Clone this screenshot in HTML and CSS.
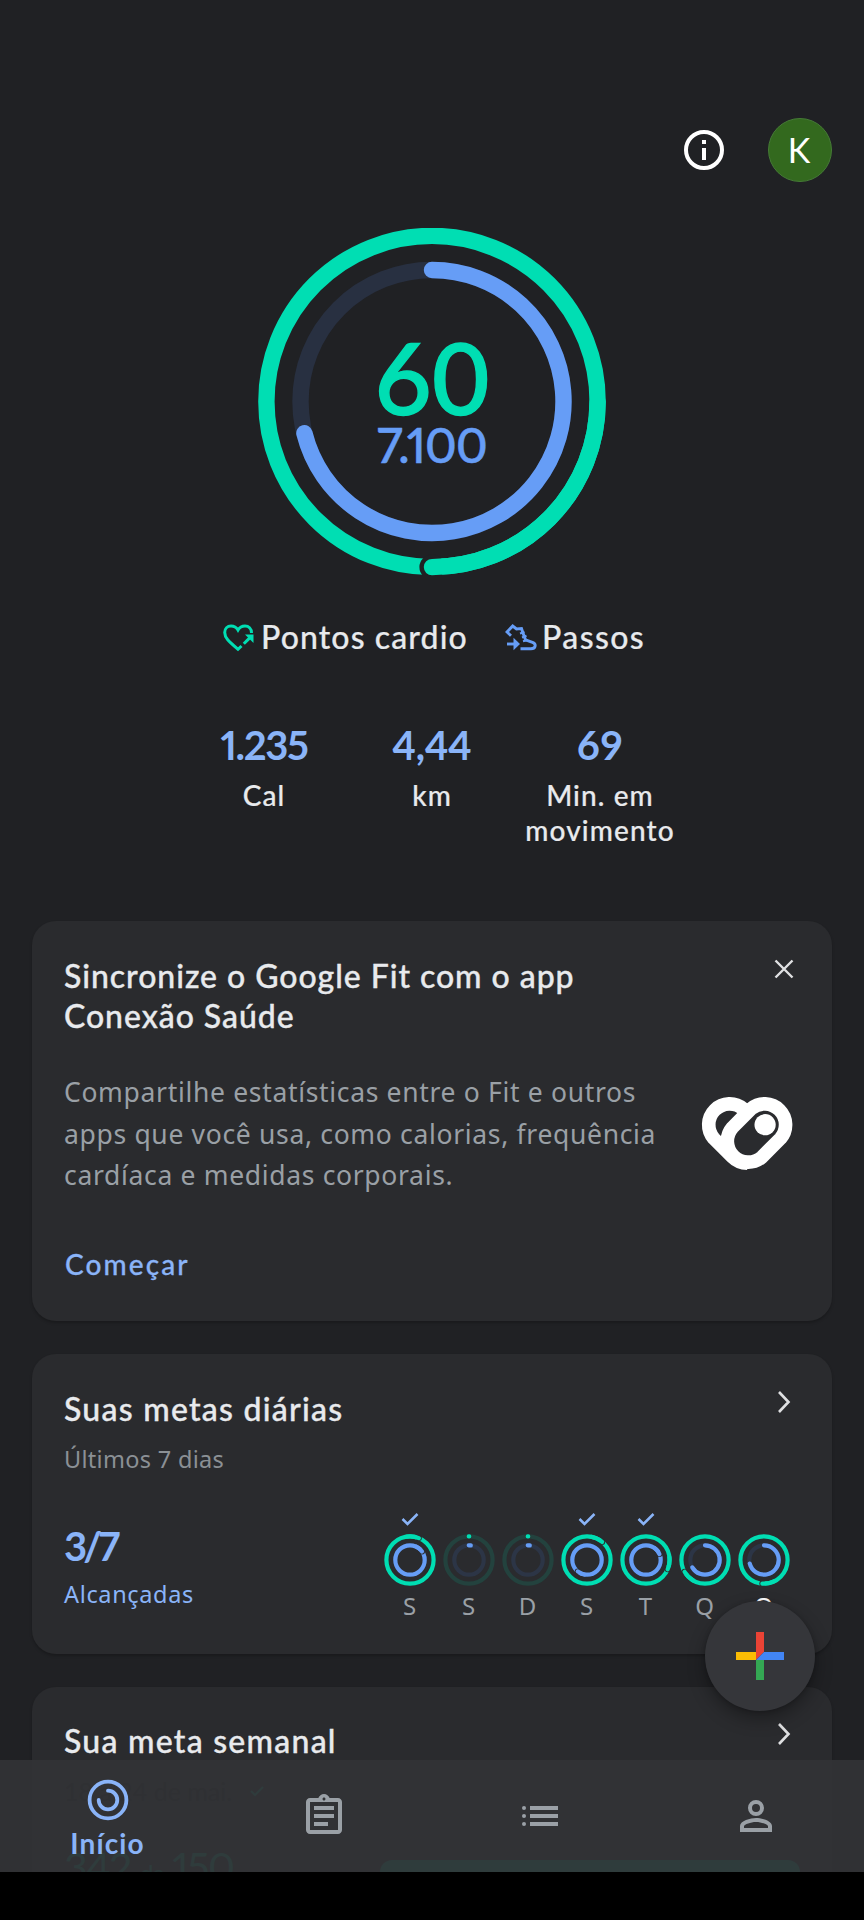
FILE: index.html
```
<!DOCTYPE html>
<html lang="pt-BR">
<head>
<meta charset="utf-8">
<title>Fit</title>
<link rel="stylesheet" href="styles.css">
</head>
<body>
<div class="screen">
  <header class="topbar">
    <svg class="info" width="40" height="40" viewBox="0 0 40 40"><circle cx="20" cy="20" r="18" fill="none" stroke="#fff" stroke-width="4"/><path d="M18 10h4v4h-4zM18 18h4v12h-4z" fill="#fff"/></svg>
    <div class="avatar">K</div>
  </header>

  <section class="summary">
    <svg class="rings" width="348" height="348" viewBox="-174 -173.5 348 348" fill="none" stroke-width="16.4">
      <circle r="165.6" stroke="#00deb3"/>
      <circle cy="165.6" r="12.6" fill="#202124"/>
      <path d="M0 165.6A165.6 165.6 0 0 0 165.6 0" stroke="#00deb3" stroke-linecap="round"/>
      <circle r="131.5" stroke="#283041"/>
      <path d="M0 -131.5A131.5 131.5 0 1 1 -127.6 31.8" stroke="#669df6" stroke-linecap="round"/>
    </svg>
    <div class="totals">
      <div class="points">60</div>
      <div class="steps">7.100</div>
    </div>
  </section>

  <div class="legend">
    <svg width="32" height="28" viewBox="0 0 32 28" fill="none" stroke="#00deb3" stroke-width="3"><path d="M28.500 9C28.500 4.500 25.500 2 22 2C19 2 16.500 3.500 15 6C13.500 3.500 11 2 8 2C4.500 2 1.700 4.700 1.700 8.500C1.700 14 6 17.500 15 25.300L18.500 22"/><path d="M20.800 19.800L27 13.600"/><path d="M22 10.500H30.500v8.500z" fill="#00deb3" stroke="none"/></svg>
    <span class="legend-cardio">Pontos cardio</span>
    <svg width="32" height="28" viewBox="0 0 32 28" fill="none" stroke="#669df6" stroke-width="2.900"><path d="M6 11.800L2 8L7.700 2L11.500 5L16.500 4.500L18 9L20.500 15.800L27.500 18.300C30 19.300 30.500 20.800 30 22.500C29.500 24.300 28.200 24.700 26 24.700H15.500"/><path d="M15 9.500L19.500 8M17 13.500L21.500 11.800M18 17.300L23 16" stroke-width="2.200"/><path d="M2 20H10"/><path d="M8.500 13.800L15 20L8.500 26.200z" fill="#669df6" stroke="none"/></svg>
    <span class="legend-steps">Passos</span>
  </div>

  <section class="stats">
    <div><div class="stat-value calories">1.235</div><div class="stat-label">Cal</div></div>
    <div><div class="stat-value">4,44</div><div class="stat-label">km</div></div>
    <div><div class="stat-value">69</div><div class="stat-label">Min. em<br>movimento</div></div>
  </section>

  <main class="cards">
    <article class="card sync">
      <div class="sync-text">
        <h2>Sincronize o Google Fit com o app<br>Conexão Saúde</h2>
        <p class="body">Compartilhe estatísticas entre o Fit e outros<br>apps que você usa, como calorias, frequência<br>cardíaca e medidas corporais.</p>
        <a class="start">Começar</a>
      </div>
      <div class="sync-side">
        <svg class="close" width="20" height="20" viewBox="0 0 20 20"><path d="M1.500 1.500L18.500 18.500M18.500 1.500L1.500 18.500" stroke="#e0e1e3" stroke-width="2.400"/></svg>
        <svg width="93" height="75" viewBox="0 0 92 74" fill="none" stroke="#fff" stroke-width="13.500"><path d="M45.700 45.700m0 20.700A20.700 20.700 0 0 1 31.100 60.300L12.700 41.900A20.700 20.700 0 0 1 41.900 12.700L45 16"/><path d="M49.400 12.700L31.100 31.100A20.700 20.700 0 0 0 60.300 60.300L78.600 41.900A20.700 20.700 0 0 0 49.400 12.700z"/><circle cx="63.400" cy="28.300" r="10.500" fill="#fff" stroke="none"/></svg>
      </div>
    </article>

    <article class="card goals">
      <div class="card-head"><h2 class="wide">Suas metas diárias</h2>
        <svg class="chevron" width="14" height="24" viewBox="0 0 14 24"><path d="M2 2L11.500 12L2 22" fill="none" stroke="#dfe0e2" stroke-width="2.600"/></svg></div>
      <div class="sub">Últimos 7 dias</div>
      <div class="goals-row">
        <div class="reached"><div class="ratio">3/7</div><div class="reached-label">Alcançadas</div></div>
        <div class="week" id="week"></div>
      </div>
    </article>

    <article class="card weekly">
      <div class="card-head"><h2 class="wide">Sua meta semanal</h2>
        <svg class="chevron" width="14" height="24" viewBox="0 0 14 24"><path d="M2 2L11.500 12L2 22" fill="none" stroke="#dfe0e2" stroke-width="2.600"/></svg></div>
      <div class="range">18 a 24 de mai. <svg width="14" height="11" viewBox="0 0 14 11"><path d="M1 5L5 9L13 1" fill="none" stroke="#00deb3" stroke-width="2"/></svg></div>
      <div class="weekly-row"><div class="weekly-points">342 <small>de</small> 150</div><div class="bar"></div></div>
    </article>
  </main>

  <button class="fab" aria-label="Adicionar"><svg width="48" height="48" viewBox="0 0 48 48"><path d="M0 20h20v8H0z" fill="#fbbc04"/><path d="M20 0h8v20l-8 8z" fill="#ea4335"/><path d="M20 28h8v20h-8z" fill="#34a853"/><path d="M28 20h20v8H20z" fill="#4285f4"/></svg></button>

  <nav class="nav">
    <a class="tab active"><svg width="42" height="42" viewBox="-21 -21 42 42" fill="none" stroke="#8ab4f8" stroke-width="3.800"><circle r="18.400"/><path d="M0 -9.300A9.300 9.300 0 1 1 -9.300 0" stroke-linecap="round"/></svg><span>Início</span></a>
    <a class="tab"><svg width="48" height="48" viewBox="0 0 24 24" fill="#9aa0a6"><path d="M7 15h7v2H7zm0-4h10v2H7zm0-4h10v2H7zm12-4h-4.180C14.400 1.840 13.300 1 12 1s-2.400.84-2.820 2H5c-1.100 0-2 .9-2 2v14c0 1.100.9 2 2 2h14c1.100 0 2-.9 2-2V5c0-1.100-.9-2-2-2zm-7-.250c.41 0 .75.340.75.750s-.340.750-.75.750-.75-.340-.75-.750.340-.750.750-.750zM19 19H5V5h14v14z"/></svg></a>
    <a class="tab"><svg width="36" height="20" viewBox="0 0 36 20" fill="#9aa0a6"><circle cx="2" cy="2" r="2"/><circle cx="2" cy="10" r="2"/><circle cx="2" cy="18" r="2"/><path d="M8 0h28v4H8zM8 8h28v4H8zM8 16h28v4H8z"/></svg></a>
    <a class="tab"><svg width="48" height="48" viewBox="0 0 24 24" fill="#9aa0a6"><path fill-rule="evenodd" d="M12 4a4 4 0 1 0 0 8a4 4 0 1 0 0-8zM12 6a2 2 0 1 1 0 4a2 2 0 1 1 0-4zM12 13c-2.670 0-8 1.340-8 4v3h16v-3c0-2.660-5.330-4-8-4zm6 5H6v-.99c.2-.720 3.300-2.010 6-2.010s5.800 1.290 6 2v1z"/></svg></a>
  </nav>
  <div class="system-bar"></div>
</div>
<script src="week.js"></script>
</body>
</html>
```
FILE: styles.css
```
* { box-sizing: border-box; }
body { margin: 0; background: #202124; font-family: Lato, "Liberation Sans", sans-serif; color: #e8eaed; }
h2, p { margin: 0; }
svg { display: block; flex: none; }
.screen { position: relative; width: 864px; height: 1920px; overflow: hidden; display: flex; flex-direction: column; }

.topbar { height: 228px; padding: 118px 32px 0 0; display: flex; justify-content: flex-end; gap: 44px; flex: none; }
.info { margin-top: 12px; }
.avatar { width: 64px; height: 64px; padding-right: 2px; border-radius: 50%; background: #33691e; border: 1.5px solid #457a36; display: flex; align-items: center; justify-content: center; font: 400 34px/64px Lato, sans-serif; color: #fff; }

.summary { display: grid; justify-items: center; height: 348px; flex: none; }
.rings, .totals { grid-area: 1 / 1; }
.totals { padding-top: 109px; text-align: center; font-weight: 500; }
.points { font-size: 99px; line-height: 80px; color: #00deb3; -webkit-text-stroke: 1.4px; }
.steps { margin-top: 4px; font-size: 48px; line-height: 48px; font-variant-numeric: proportional-nums; letter-spacing: -.8px; color: #669df6; -webkit-text-stroke: .6px; }

.legend { display: flex; height: 40px; margin: 40px 0 64px; padding-left: 223px; font-size: 32px; line-height: 41px; font-weight: 500; letter-spacing: 1.1px; -webkit-text-stroke: .2px; flex: none; }
.legend svg { margin-top: 8px; }
.legend-cardio { width: 244px; margin-left: 6px; }
.legend-steps { margin-left: 5px; letter-spacing: 1.4px; }

.stats { display: grid; grid-template-columns: repeat(3, 168px); justify-content: center; height: 201px; padding-top: 1px; text-align: center; font-weight: 500; flex: none; }
.stat-value { font-size: 40px; line-height: 48px; font-weight: 700; color: #8ab4f8; }
.calories { font-variant-numeric: proportional-nums; letter-spacing: -1.4px; }
.stat-label { margin-top: 9px; font-size: 28px; line-height: 35px; letter-spacing: 1.1px; -webkit-text-stroke: .2px; }

.cards { display: flex; flex-direction: column; gap: 33px; padding: 0 32px; }
.card { background: #2a2b2e; border-radius: 24px; padding: 35px 32px 0; box-shadow: 0 2px 3px rgba(0, 0, 0, .22); flex: none; }
.card h2 { font-size: 32px; line-height: 40px; font-weight: 500; letter-spacing: .95px; -webkit-text-stroke: .35px; white-space: nowrap; }
.card h2.wide { letter-spacing: 1.25px; }
.sync { height: 400px; display: flex; justify-content: space-between; }
.sync-text { width: 600px; }
.body { margin-top: 36px; font: 400 26.5px/41.6px "Noto Sans", sans-serif; letter-spacing: .67px; color: #9aa0a6; white-space: nowrap; }
.start { display: block; margin: 49px 0 0 1px; font-size: 28px; line-height: 36px; font-weight: 500; letter-spacing: 2.1px; -webkit-text-stroke: .3px; color: #8ab4f8; }
.sync-side { display: flex; flex-direction: column; align-items: flex-end; gap: 117px; padding: 3px 6px 0 0; }

.card-head { display: flex; justify-content: space-between; }
.chevron { margin: 1px 9px 0 0; }
.goals { height: 300px; }
.sub { margin-top: 14px; font: 400 23.5px/32px "Noto Sans", sans-serif; letter-spacing: .3px; color: #8b9095; }
.goals-row { display: flex; justify-content: space-between; margin-top: 38px; }
.reached { padding-top: 9px; color: #8ab4f8; }
.ratio { font-size: 40px; line-height: 48px; font-weight: 700; letter-spacing: -4px; }
.reached-label { margin-top: 8px; font: 400 23.5px/32px "Noto Sans", sans-serif; letter-spacing: .65px; }
.week { display: grid; grid-template-columns: repeat(7, 59px); margin-right: 7px; }
.day { display: flex; flex-direction: column; align-items: center; }
.tick { height: 21px; }
.day-label { margin-top: 4px; font: 400 24px/32px "Noto Sans", sans-serif; color: #9aa0a6; }
.day-label.today { color: #fff; }

.weekly { height: 300px; }
.weekly .card-head { margin-top: -1px; }
.range { display: flex; gap: 18px; align-items: center; margin-top: 14px; font-size: 25px; line-height: 32px; color: #000; }
.weekly-row { display: flex; justify-content: space-between; margin-top: 36px; }
.weekly-points { font-size: 41px; line-height: 48px; font-variant-numeric: proportional-nums; letter-spacing: -1.4px; color: #00deb3; }
.weekly-points small { font-size: 24px; }
.bar { width: 420px; height: 24px; margin: 17px 0 0 0; border-radius: 12px; background: #00deb3; }

.fab { position: absolute; left: 705px; top: 1601px; width: 110px; height: 110px; border: 0; padding: 0; border-radius: 50%; background: #35363a; display: flex; align-items: center; justify-content: center; box-shadow: 0 8px 18px rgba(0, 0, 0, .32), 0 1px 4px rgba(0, 0, 0, .2); }
.nav { position: absolute; left: 0; top: 1760px; width: 864px; height: 112px; background: rgba(50, 51, 54, .95); display: grid; grid-template-columns: repeat(4, 216px); }
.tab { display: flex; flex-direction: column; align-items: center; justify-content: center; }
.tab.active { justify-content: flex-start; padding: 19px 1px 0 0; font-size: 28px; line-height: 36px; font-weight: 700; letter-spacing: 1.1px; color: #8ab4f8; }
.tab.active span { margin-top: 4px; }
.system-bar { position: absolute; left: 0; top: 1872px; width: 864px; height: 48px; background: #000; }
```
FILE: week.js
```
// Each ring takes the angle (in degrees, clockwise from the top) where its progress ends.
const days = [
  { label: 'S', done: true, cardio: 22, steps: 55, stepsFull: true },
  { label: 'S', empty: true },
  { label: 'D', empty: true },
  { label: 'S', done: true, cardio: 40, steps: 219, stepsFull: true },
  { label: 'T', done: true, cardio: 113, steps: 66, stepsFull: true },
  { label: 'Q', cardio: 240, steps: 240 },
  { label: 'Q', cardio: 184, steps: 256, today: true }
];
const GREEN = '#00deb3', BLUE = '#669df6';

function point(r, deg) {
  const a = deg * Math.PI / 180;
  return [(r * Math.sin(a)).toFixed(2), (-r * Math.cos(a)).toFixed(2)];
}
function arc(r, from, to, color, cap) {
  const large = to - from > 180 ? 1 : 0;
  return `<path d="M${point(r, from)}A${r} ${r} 0 ${large} 1 ${point(r, to)}" stroke="${color}" stroke-linecap="${cap}"/>`;
}
function full(r, end, color) {
  const [x, y] = point(r, end);
  return `<circle r="${r}" stroke="${color}"/><circle cx="${x}" cy="${y}" r="3" fill="#2a2b2e" stroke="none"/>` +
    arc(r, end - 30, end, color, 'round');
}
function rings(d) {
  if (d.empty) {
    return `<circle r="23.6" stroke="#23423e"/><circle r="14.7" stroke="#2c3546"/>` +
      arc(23.6, -0.5, 0.5, GREEN, 'round') + arc(14.7, -1, 7, BLUE, 'round');
  }
  const steps = d.stepsFull ? full(14.7, d.steps, BLUE)
    : '<circle r="14.7" stroke="#2c3546"/>' + arc(14.7, 0, d.steps, BLUE, 'round');
  return full(23.6, d.cardio, GREEN) + steps;
}
document.getElementById('week').innerHTML = days.map(d => `
  <div class="day">
    <div class="tick">${d.done ? '<svg width="18" height="13" viewBox="0 0 18 13"><path d="M1.500 6L6.500 11L16.500 1" fill="none" stroke="#8ab4f8" stroke-width="2.500"/></svg>' : ''}</div>
    <svg width="52" height="52" viewBox="-26 -26 52 52" fill="none" stroke-width="4.200">${rings(d)}</svg>
    <div class="day-label${d.today ? ' today' : ''}">${d.label}</div>
  </div>`).join('');
```
